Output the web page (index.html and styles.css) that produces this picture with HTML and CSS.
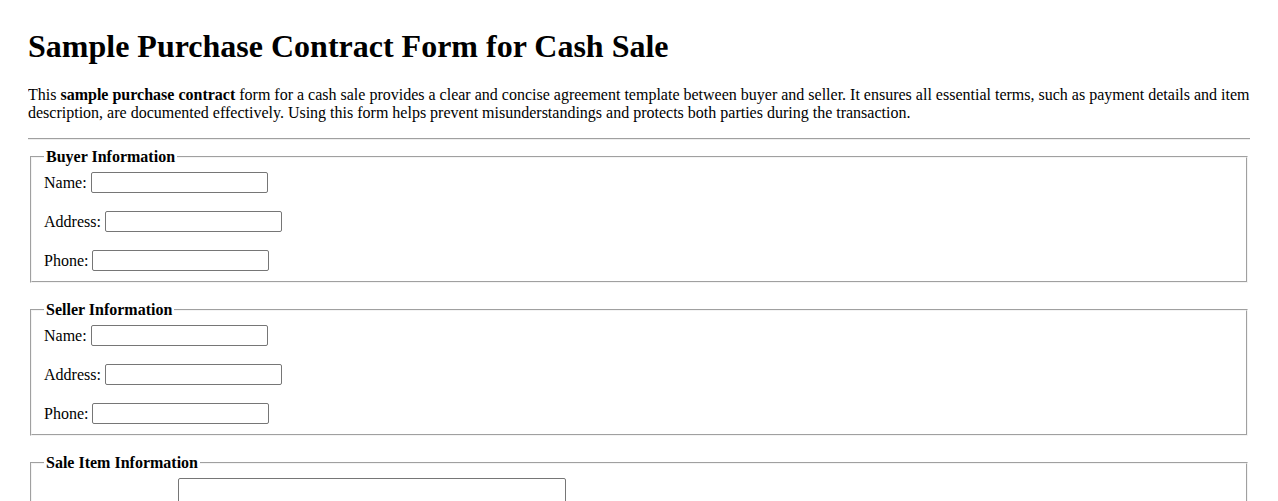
FILE: index.html
```html
<!DOCTYPE html>
<html lang="en">
<head>
<meta charset="utf-8">
<title>Sample Purchase Contract Form for Cash Sale</title>
<link rel="stylesheet" href="styles.css">
</head>
<body>
<h1 class="title">Sample Purchase Contract Form for Cash Sale</h1>
<p class="intro">This <strong>sample purchase contract</strong> form for a cash sale provides a clear and concise agreement template between buyer and seller. It ensures all essential terms, such as payment details and item description, are documented effectively. Using this form helps prevent misunderstandings and protects both parties during the transaction.</p>
<hr class="rule">
<form class="contract">
  <fieldset class="group">
    <legend class="group-title">Buyer Information</legend>
    <div class="field"><label for="buyer-name">Name:</label><input class="text-input" id="buyer-name" type="text"></div>
    <div class="field"><label for="buyer-address">Address:</label><input class="text-input" id="buyer-address" type="text"></div>
    <div class="field"><label for="buyer-phone">Phone:</label><input class="text-input" id="buyer-phone" type="text"></div>
  </fieldset>
  <fieldset class="group">
    <legend class="group-title">Seller Information</legend>
    <div class="field"><label for="seller-name">Name:</label><input class="text-input" id="seller-name" type="text"></div>
    <div class="field"><label for="seller-address">Address:</label><input class="text-input" id="seller-address" type="text"></div>
    <div class="field"><label for="seller-phone">Phone:</label><input class="text-input" id="seller-phone" type="text"></div>
  </fieldset>
  <fieldset class="group">
    <legend class="group-title">Sale Item Information</legend>
    <div class="field field-area"><label class="area-label" for="item-desc">Item Description:</label><textarea class="text-area" id="item-desc" rows="4"></textarea></div>
    <div class="field"><label for="item-price">Sale Price ($):</label><input class="text-input" id="item-price" type="text"></div>
  </fieldset>
</form>
</body>
</html>
```

FILE: styles.css
```css
body {
  margin: 28px;
  font-family: "Liberation Serif", "Times New Roman", serif;
  font-size: 16px;
  color: #000;
  background: #fff;
}

.title {
  font-size: 32px;
  font-weight: bold;
  margin: 0 0 21px;
  line-height: 37px;
}

.intro {
  margin: 16px 0;
  line-height: 18px;
}

.rule {
  margin: 8px 0;
  border: 0;
  border-top: 1px solid #a0a0a0;
  border-bottom: 1px solid #eeeeee;
  height: 0;
}

.contract {
  margin: 0;
}

/* light grey groove frame around each section */
.group {
  margin: 2px 2px 18px;
  padding: 6px 12px 10px;
  border: 2px groove #f4f4f4;
  display: flex;
  flex-direction: column;
  gap: 18px;
}

.group-title {
  font-weight: bold;
  padding: 0 2px;
  line-height: 18px;
}

.field {
  display: flex;
  align-items: center;
  gap: 4px;
  height: 21px;
}

.field-area {
  align-items: flex-end;
  height: auto;
}

.area-label {
  width: 130px;
}

.text-input {
  box-sizing: border-box;
  width: 177px;
  height: 21px;
  margin: 0;
  padding: 1px 2px;
  border: 1px solid #767676;
  border-radius: 2px;
  font: 13.33px Arial, "Liberation Sans", sans-serif;
}

.text-area {
  box-sizing: border-box;
  width: 388px;
  height: 70px;
  margin: 0;
  padding: 2px;
  border: 1px solid #767676;
  border-radius: 2px;
  font: 13.33px "Liberation Mono", monospace;
  resize: vertical;
}
```
